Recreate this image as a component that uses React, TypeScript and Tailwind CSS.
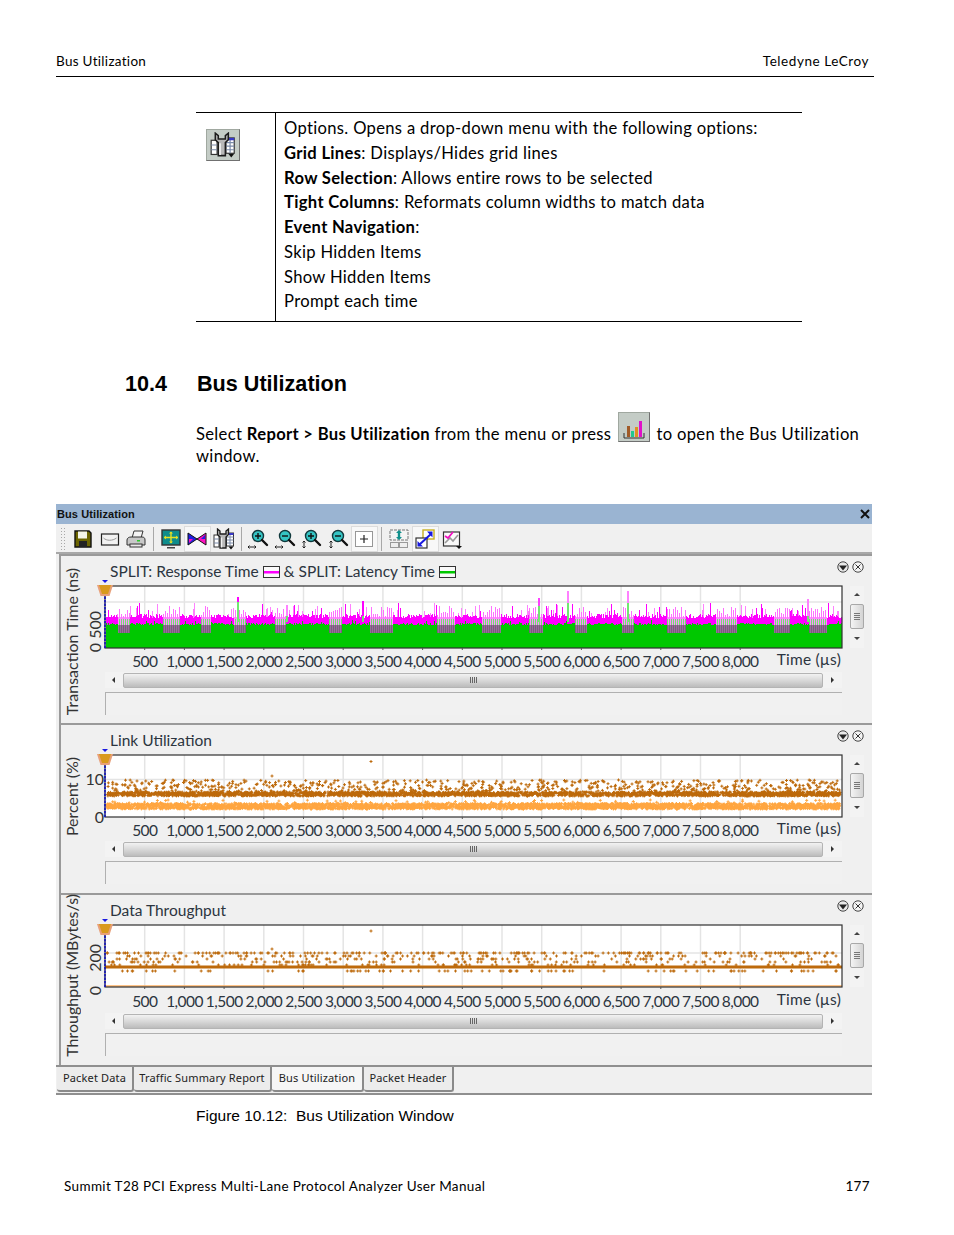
import React from 'react';

const PLOT_W = 737;
const PLOT_H = 62;
const TICKS = ['500', '1,000', '1,500', '2,000', '2,500', '3,000', '3,500', '4,000', '4,500', '5,000', '5,500', '6,000', '6,500', '7,000', '7,500', '8,000'];

// small seeded generator so every render gives the same chart
const makeRandom = (seed: number) => {
    let s = seed;
    return () => {
        s = (s * 16807) % 2147483647;
        return s / 2147483647;
    };
};

const dots = (pts: [number, number][]) =>
    pts.map(([x, y]) => `M${(x - 1.5).toFixed(1)} ${y.toFixed(1)}h3M${x.toFixed(1)} ${(y - 1.5).toFixed(1)}v3`).join('');

const GridLines = ({ rows }: { rows: number[] }) => (
    <g stroke="#e4e4e4" strokeWidth="1.5">
        {TICKS.map((_, i) => (
            <line key={i} x1={39.7 * (i + 1)} x2={39.7 * (i + 1)} y1="0" y2={PLOT_H} />
        ))}
        {rows.map((y) => (
            <line key={y} x1="0" x2={PLOT_W} y1={y} y2={y} />
        ))}
    </g>
);

const PlotFrame = () => (
    <g>
        <rect x="0" y="0" width={PLOT_W} height={PLOT_H} fill="none" stroke="#303030" strokeWidth="1.2" />
        {TICKS.map((_, i) => (
            <line key={i} x1={39.7 * (i + 1)} x2={39.7 * (i + 1)} y1={PLOT_H} y2={PLOT_H + 2} stroke="#555" />
        ))}
        <line x1="0" x2="0" y1="0" y2={PLOT_H} stroke="#1010c0" strokeWidth="1.6" strokeDasharray="2.5 1" />
        <path d="M-3 -6h6l-3 3z" fill="#1a1ae0" />
        <path d="M-8 -1h16l-3.5 11h-9z" fill="#e8a07a" />
        <path d="M-6 -1h12l-3 9h-6z" fill="#d99a1c" />
    </g>
);

const responseBars = () => {
    const rnd = makeRandom(4711);
    const bars: React.ReactNode[] = [];
    let left = 12;
    let gappy = false;
    const spikes: Record<number, [number, string, number]> = {
        132: [11, '#ff00ff', 16],
        181: [19, '#ff80ff', 30],
        257: [15, '#ff00ff', 30],
        433: [12, '#ff40ff', 20],
        462: [5, '#ff80ff', 17],
        522: [5, '#ff80ff', 17],
        702: [13, '#ff80ff', 30],
    };
    const bar = (key: string, x: number, y: number, h: number, fill: string) => {
        bars.push(<rect key={key} x={x} y={y} width="1" height={h} fill={fill} />);
    };
    for (let x = 1; x < PLOT_W; x++) {
        if (left-- <= 0) {
            gappy = !gappy;
            left = gappy ? 8 + rnd() * 14 : 16 + rnd() * 36;
        }
        const greenTop = 37 + rnd() * 2 - (rnd() > 0.95 ? 3 : 0);
        const magTop = 28 + rnd() * 4;
        if (gappy) {
            bar(`g${x}`, x, 47, PLOT_H - 47, '#00c800');
            if (x % 2 === 0) {
                const top = 20 + rnd() * 10;
                bar(`a${x}`, x, top, 33 - top, '#ff70ff');
                bar(`b${x}`, x, 33, 6, '#70e070');
                bar(`d${x}`, x, 39, 8, '#7c5c7c');
            } else {
                bar(`a${x}`, x, 31, 8, '#ff90ff');
                bar(`d${x}`, x, 39, 8, '#94709a');
            }
        } else {
            bar(`c${x}`, x, greenTop, PLOT_H - greenTop, '#00c800');
            bar(`a${x}`, x, magTop, greenTop - magTop, '#ff00ff');
            if (rnd() > 0.8) {
                const top = 17 + rnd() * 11;
                bar(`l${x}`, x, top, magTop - top, rnd() > 0.6 ? '#ff00ff' : '#ff80ff');
            }
        }
    }
    Object.entries(spikes).forEach(([k, [top, color, mid]]) => {
        bars.push(<rect key={`s${k}`} x={Number(k)} y={top} width="1.5" height={mid - top} fill={color} />);
        bars.push(<rect key={`n${k}`} x={Number(k)} y={mid} width="1.5" height={36 - mid} fill="#70e870" />);
    });
    return bars;
};

const ResponseChart = () => (
    <svg width={PLOT_W} height={PLOT_H} className="block overflow-visible bg-white">
        <GridLines rows={[16]} />
        <g shapeRendering="crispEdges">{responseBars()}</g>
        <PlotFrame />
    </svg>
);

const linkPoints = () => {
    const rnd = makeRandom(991);
    const dark: [number, number][] = [[266, 6.5], [167, 21]];
    const light: [number, number][] = [];
    for (let i = 0; i < 620; i++) dark.push([2 + rnd() * 733, 25 + rnd() * 12]);
    for (let i = 0; i < 2400; i++) dark.push([2 + rnd() * 733, 37 + rnd() * 4]);
    for (let i = 0; i < 3200; i++) light.push([2 + rnd() * 733, 48.5 + rnd() * 5.5]);
    for (let i = 0; i < 60; i++) light.push([2 + rnd() * 733, 45 + rnd() * 3]);
    return { dark: dots(dark), light: dots(light) };
};

const LinkChart = () => {
    const { dark, light } = linkPoints();
    return (
        <svg width={PLOT_W} height={PLOT_H} className="block overflow-visible bg-white">
            <GridLines rows={[24.5]} />
            <path d={light} stroke="#ffa640" fill="none" />
            <path d={dark} stroke="#bd6a0c" fill="none" />
            <PlotFrame />
        </svg>
    );
};

const throughputPoints = () => {
    const rnd = makeRandom(3571);
    const pts: [number, number][] = [[266, 6], [167, 24]];
    const rows = [31, 34, 37, 40, 46];
    for (let i = 0; i < 620; i++) {
        const y = i % 3 === 0 ? 28 : rows[Math.floor(rnd() * rows.length)];
        pts.push([2 + rnd() * 733, y]);
    }
    return dots(pts);
};

const ThroughputChart = () => (
    <svg width={PLOT_W} height={PLOT_H} className="block overflow-visible bg-white">
        <GridLines rows={[28]} />
        <path d={throughputPoints()} stroke="#bd6a0c" fill="none" />
        <line x1="0" x2={PLOT_W} y1="42" y2="42" stroke="#bd6a0c" strokeWidth="2.8" />
        <line x1="0" x2={PLOT_W} y1="61" y2="61" stroke="#ffb060" strokeWidth="1.5" />
        <PlotFrame />
    </svg>
);

const RoundButtons = () => (
    <div className="flex gap-[3px]">
        <svg width="12" height="12" viewBox="0 0 12 12">
            <circle cx="6" cy="6" r="5.2" fill="#e8e8e8" stroke="#444" />
            <path d="M2 4.5h8l-4 5z" fill="#222" />
        </svg>
        <svg width="12" height="12" viewBox="0 0 12 12">
            <circle cx="6" cy="6" r="5.2" fill="#f4f4f4" stroke="#444" />
            <path d="M3.5 3.5l5 5M8.5 3.5l-5 5" stroke="#333" />
        </svg>
    </div>
);

const VScroll = () => (
    <div className="ml-[8px] flex h-[62px] w-[14px] flex-col items-center bg-[#f3f3f3]">
        <svg width="14" height="14" viewBox="0 0 14 14" className="mt-[2px]">
            <path d="M4 8h6l-3-3z" fill="#444" />
        </svg>
        <div className="mt-[2px] flex h-[25px] w-[14px] flex-col items-center justify-center gap-[1px] rounded-[2px] border border-[#a8a8a8] bg-gradient-to-r from-[#f4f4f4] to-[#d4d4d4]">
            <div className="h-px w-[6px] bg-[#777]" />
            <div className="h-px w-[6px] bg-[#777]" />
            <div className="h-px w-[6px] bg-[#777]" />
            <div className="h-px w-[6px] bg-[#777]" />
        </div>
        <svg width="14" height="14" viewBox="0 0 14 14" className="mt-[2px]">
            <path d="M4 6h6l-3 3z" fill="#444" />
        </svg>
    </div>
);

const HScroll = () => (
    <div className="flex h-[16px] w-[737px] items-center bg-[#f3f3f3]">
        <svg width="18" height="16" viewBox="0 0 18 16">
            <path d="M10 5v6l-3-3z" fill="#333" />
        </svg>
        <div className="flex h-[15px] w-[700px] items-center justify-center rounded-[2px] border border-[#b4b4b4] bg-gradient-to-b from-[#f2f2f2] via-[#d8d8d8] to-[#bcbcbc]">
            <div className="flex gap-[1px]">
                <div className="h-[6px] w-px bg-[#666]" />
                <div className="h-[6px] w-px bg-[#666]" />
                <div className="h-[6px] w-px bg-[#666]" />
                <div className="h-[6px] w-px bg-[#666]" />
            </div>
        </div>
        <svg width="19" height="16" viewBox="0 0 19 16">
            <path d="M8 5v6l3-3z" fill="#333" />
        </svg>
    </div>
);

const XLabels = ({ rowClass }: { rowClass: string }) => (
    <div className={`flex w-[737px] items-center pl-[20px] text-[#2c3540] ${rowClass}`}>
        {TICKS.map((t) => (
            <div key={t} className="flex w-[39.7px] shrink-0 justify-center whitespace-nowrap pt-[3px] text-[15.5px] tracking-[-0.55px]">
                {t}
            </div>
        ))}
        <div className="-mt-[1px] ml-auto mr-[1px] whitespace-nowrap text-[15.5px] tracking-[0.2px]">Time (µs)</div>
    </div>
);

interface PanelProps {
    axis: string;
    axisClass: string;
    title: React.ReactNode;
    ticks: React.ReactNode;
    chart: React.ReactNode;
    rowClass: string;
    panelClass: string;
}

const Panel = ({ axis, axisClass, title, ticks, chart, rowClass, panelClass }: PanelProps) => (
    <div className={`ml-[3px] flex border-l-2 border-t-2 border-[#9a9a9a] ${panelClass}`}>
        <div className={`flex w-[22px] shrink-0 items-center justify-center ${axisClass}`}>
            <span className="rotate-180 whitespace-nowrap text-[16px] text-[#333] [writing-mode:vertical-rl]">{axis}</span>
        </div>
        <div className="flex flex-col">
            <div className="flex h-[30px] items-start justify-between pl-[27px]">
                <div className="flex h-[30px] items-center pt-[2px] text-[15.5px] text-[#2c3540]">{title}</div>
                <div className="pt-[5px]"><RoundButtons /></div>
            </div>
            <div className="flex h-[62px]">
                <div className="h-[62px] w-[22px] shrink-0 text-[16px] text-[#333]">{ticks}</div>
                {chart}
                <VScroll />
            </div>
            <div className="pl-[22px]">
                <XLabels rowClass={rowClass} />
                <HScroll />
                <div className="mt-[4px] h-[23px] w-[737px] border-l border-t border-[#b0b0b0] bg-[#f1f1f1]" />
            </div>
        </div>
    </div>
);

const Legend = ({ color }: { color: string }) => (
    <svg width="17" height="12" viewBox="0 0 17 12" className="mx-[4px] inline-block">
        <rect x="0.5" y="0.5" width="16" height="11" fill="#fafafa" stroke="#333" />
        <rect x="1" y="5" width="15" height="2.5" fill={color} />
    </svg>
);

const Icon = ({ children }: { children: React.ReactNode }) => (
    <svg width="22" height="22" viewBox="0 0 22 22">{children}</svg>
);

const ZoomIcon = ({ minus, vertical }: { minus?: boolean; vertical?: boolean }) => (
    <Icon>
        <circle cx="11" cy="8" r="5.5" fill="#35c4c4" stroke="#10383c" strokeWidth="1.4" />
        <path d="M15 12l5 5" stroke="#111" strokeWidth="2.4" strokeLinecap="round" />
        <path d={minus ? 'M8 8h6' : 'M8 8h6M11 5v6'} stroke="#111" strokeWidth="1.4" />
        {vertical ? (
            <path d="M4 13v7M2.5 14.5L4 13l1.5 1.5M2.5 18.5L4 20l1.5-1.5" stroke="#222" fill="none" />
        ) : (
            <path d="M1 19h8M2.5 17.5L1 19l1.5 1.5M7.5 17.5L9 19l-1.5 1.5" stroke="#222" fill="none" />
        )}
    </Icon>
);

const ToolsIcon = ({ size = 22 }: { size?: number }) => (
    <svg width={size} height={size} viewBox="0 0 22 22">
        <rect x="1" y="7" width="5" height="12" fill="#fff" stroke="#333" />
        <path d="M1 11h5M1 15h5" stroke="#7a8aa8" />
        <rect x="13.5" y="5" width="7" height="13" fill="#fff" stroke="#333" />
        <path d="M13.5 9h7M13.5 12h7M13.5 15h7M17 5v13" stroke="#7a8aa8" />
        <rect x="13.5" y="5" width="7" height="2" fill="#3838c8" />
        <path d="M4.5 1v5.5l2.5 2.5v11h6v-11l2.5-2.5V1l-2.5 2v3h-6V3z" fill="#b8b8b8" stroke="#1c1c1c" strokeWidth="1.3" />
        <path d="M8.5 9.5v10" stroke="#f2f2f2" strokeWidth="1.4" />
        <path d="M15.5 18.5h5l-2.5 3z" fill="#111" />
    </svg>
);

const toolbarBtn = 'flex h-[26px] w-[26.5px] shrink-0 items-center justify-center';
const toolbarOn = 'flex h-[26px] w-[26.5px] shrink-0 items-center justify-center border border-[#dcdcdc] bg-[#f8f8f8]';
const Sep = () => <div className="mx-[3.5px] h-[24px] w-px shrink-0 bg-[#a8a8a8]" />;

const Toolbar = () => (
    <div className="flex h-[30px] items-center border-b-2 border-[#a8a8a8] bg-[#f0f0f0] pl-[4px] pt-[1px]">
        <div className="mr-[4px] h-[24px] w-[6px] bg-[radial-gradient(#a8a8a8_1px,transparent_1px)] [background-size:3px_3px]" />
        <div className={toolbarBtn}>
            <Icon>
                <path d="M3 3h14l2 2v14H3z" fill="#6b6400" stroke="#111" strokeWidth="1.4" />
                <rect x="6" y="3.5" width="9" height="7" fill="#f4f4e8" />
                <rect x="7" y="13" width="8" height="6" fill="#222" />
            </Icon>
        </div>
        <div className={toolbarBtn}>
            <Icon>
                <rect x="2.5" y="6" width="17" height="11" fill="#f2f2f2" stroke="#222" strokeWidth="1.2" />
                <path d="M4.5 10c3 3 9 3 13 0" stroke="#999" fill="none" />
            </Icon>
        </div>
        <div className={toolbarBtn}>
            <Icon>
                <path d="M7 10l2-7h9l-2 7" fill="#f4f4f4" stroke="#333" />
                <path d="M2 12c0-2 2-3 4-3h11c2 0 3 1 3 3v5H2z" fill="#c8c8c8" stroke="#333" />
                <rect x="5" y="16" width="12" height="3" fill="#e8e8e8" stroke="#333" />
                <rect x="12" y="12" width="3" height="1.5" fill="#2bc82b" />
            </Icon>
        </div>
        <Sep />
        <div className={toolbarBtn}>
            <Icon>
                <rect x="2" y="2" width="18" height="15" fill="#0e8c8c" stroke="#333" strokeWidth="1.4" />
                <path d="M11 4v11M4 9.5h14" stroke="#e8e020" strokeWidth="1.4" />
                <path d="M9 5.5l2-2 2 2zM9 13.5l2 2 2-2zM6 7.5l-2 2 2 2zM16 7.5l2 2-2 2z" fill="#e8e020" />
                <path d="M7 19h8v1.5H7z" fill="#444" />
            </Icon>
        </div>
        <div className={toolbarOn}>
            <Icon>
                <path d="M2 5l9 6-9 6z" fill="#2020e0" stroke="#111" />
                <path d="M20 5l-9 6 9 6z" fill="#ff10c0" stroke="#111" />
                <path d="M3 11h4l-4 4z" fill="#ff10c0" />
                <path d="M19 7v4h-4z" fill="#2020e0" />
            </Icon>
        </div>
        <div className={toolbarBtn}><ToolsIcon /></div>
        <Sep />
        <div className={toolbarBtn}><ZoomIcon /></div>
        <div className={toolbarBtn}><ZoomIcon minus /></div>
        <div className={toolbarBtn}><ZoomIcon vertical /></div>
        <div className={toolbarBtn}><ZoomIcon minus vertical /></div>
        <div className={toolbarOn}>
            <Icon>
                <rect x="2.5" y="3.5" width="17" height="15" fill="#fff" stroke="#333" strokeDasharray="1 1" />
                <path d="M11 7v8M7 11h8" stroke="#222" strokeWidth="1.2" />
            </Icon>
        </div>
        <Sep />
        <div className={toolbarBtn}>
            <Icon>
                <rect x="2" y="2" width="18" height="10" fill="#f4f4f4" stroke="#777" strokeDasharray="3 1" />
                <path d="M11 3v8" stroke="#11908c" strokeWidth="2.4" />
                <path d="M8 5l3-3 3 3zM8 9l3 3 3-3z" fill="#11908c" />
                <rect x="2.5" y="14.5" width="8" height="5" fill="#eee" stroke="#999" />
                <rect x="11.5" y="14.5" width="8" height="5" fill="#eee" stroke="#999" />
            </Icon>
        </div>
        <div className={toolbarOn}>
            <Icon>
                <rect x="9" y="2" width="11" height="9" fill="#fff" stroke="#c8b020" strokeWidth="1.4" />
                <rect x="2" y="10" width="11" height="10" fill="#fff" stroke="#333" strokeWidth="1.2" />
                <path d="M5 17l12-11" stroke="#1818e0" strokeWidth="2" />
                <path d="M3.5 13v5.5H9zM18.5 9.5V3.5H13z" fill="#1818e0" />
            </Icon>
        </div>
        <div className={toolbarBtn}>
            <Icon>
                <rect x="2.5" y="4" width="16" height="14" fill="#fafafa" stroke="#333" strokeWidth="1.2" />
                <path d="M4 15l5-5 3 3 5-6" stroke="#999" strokeWidth="1.6" fill="none" />
                <path d="M4 8l3 2 5-6" stroke="#f010c0" strokeWidth="1.8" fill="none" />
                <path d="M15 18h6l-3 3z" fill="#111" />
            </Icon>
        </div>
    </div>
);

const Tab = ({ label, w, active }: { label: string; w: string; active?: boolean }) => (
    <div
        className={`flex h-[25px] items-center justify-center rounded-b-[3px] border-b-2 border-r-2 border-[#8a8a8a] text-[11px] tracking-[0.15px] text-[#222] ${w} ${
            active ? 'bg-[#f6f6f6]' : 'bg-[#ececec]'
        }`}
    >
        {label}
    </div>
);

export default function App() {
    return (
        <div className="h-[1235px] w-[954px] overflow-hidden bg-white font-['Lato',sans-serif] text-black">
            {/* page header */}
            <div className="ml-[56px] flex h-[77px] w-[818px] items-end justify-between border-b border-black pb-[5px] text-[13.5px] tracking-[0.3px]">
                <span>Bus Utilization</span>
                <span className="mr-[5px] tracking-[0.55px]">Teledyne LeCroy</span>
            </div>

            {/* options table */}
            <div className="ml-[196px] mt-[35px] flex h-[210px] w-[606px] border-b border-t border-black">
                <div className="w-[80px] shrink-0 border-r border-black pl-[10px] pt-[16px]">
                    <div className="flex h-[32px] w-[34px] items-center justify-center border border-[#a0a8a0] border-b-[#707070] border-r-[#707070] bg-[#c4ccc6]">
                        <ToolsIcon size={26} />
                    </div>
                </div>
                <div className="whitespace-nowrap pl-[8px] pt-[3px] text-[16.6px] leading-[24.75px] tracking-[0.32px]">
                    <p>Options. Opens a drop-down menu with the following options:</p>
                    <p><b>Grid Lines</b>: Displays/Hides grid lines</p>
                    <p><b>Row Selection</b>: Allows entire rows to be selected</p>
                    <p><b>Tight Columns</b>: Reformats column widths to match data</p>
                    <p><b>Event Navigation</b>:</p>
                    <p>Skip Hidden Items</p>
                    <p>Show Hidden Items</p>
                    <p>Prompt each time</p>
                </div>
            </div>

            {/* section heading */}
            <div className="ml-[125px] mt-[48px] flex h-[28px] items-center font-['Liberation_Sans',sans-serif] text-[21.6px] font-bold">
                <span className="w-[72px]">10.4</span>
                <span>Bus Utilization</span>
            </div>

            <p className="ml-[196px] mt-[25px] w-[680px] text-[16.6px] leading-[22px] tracking-[0.32px]">
                Select <b>Report &gt; Bus Utilization</b> from the menu or press{' '}
                <span className="mx-[2px] -mt-[14px] mb-[3px] inline-flex h-[30px] w-[32px] items-end justify-center border border-[#a0a8a0] border-b-[#707070] border-r-[#707070] bg-[#c4ccc6] align-bottom">
                    <svg width="26" height="24" viewBox="0 0 26 24">
                        <path d="M3 16v5h20v-5" fill="none" stroke="#333" />
                        <rect x="6" y="9" width="3" height="11" fill="#a05a28" />
                        <rect x="10" y="14" width="3" height="6" fill="#20c890" />
                        <rect x="14" y="10" width="3" height="10" fill="#e09020" />
                        <rect x="18" y="4" width="3" height="16" fill="#e010c8" />
                    </svg>
                </span>{' '}
                to open the Bus Utilization window.
            </p>

            {/* bus utilization window */}
            <div className="ml-[56px] mt-[37px] w-[816px] bg-[#f0f0f0]">
                <div className="flex h-[20px] items-center justify-between bg-[#9ab4d2] pl-[1px] pr-[2px] font-['Liberation_Sans',sans-serif] text-[11px] font-bold tracking-[0.1px] text-[#111]">
                    <span>Bus Utilization</span>
                    <svg width="10" height="10" viewBox="0 0 10 10">
                        <path d="M1 1l8 8M9 1l-8 8" stroke="#111" strokeWidth="2" />
                    </svg>
                </div>
                <Toolbar />
                <Panel
                    axis="Transaction Time (ns)"
                    axisClass="pt-[4px]"
                    panelClass="h-[169px]"
                    rowClass="h-[24px]"
                    title={
                        <>
                            SPLIT: Response Time
                            <Legend color="#ff00ff" />
                            &amp; SPLIT: Latency Time
                            <Legend color="#00c800" />
                        </>
                    }
                    ticks={
                        <div className="flex h-[66px] items-end justify-center pl-[2px]">
                            <span className="rotate-180 whitespace-nowrap [writing-mode:vertical-rl]">0 500</span>
                        </div>
                    }
                    chart={<ResponseChart />}
                />
                <Panel
                    axis="Percent (%)"
                    axisClass="pb-[24px]"
                    panelClass="h-[170px]"
                    rowClass="h-[24px]"
                    title="Link Utilization"
                    ticks={
                        <div className="flex flex-col items-end pr-[1px] pt-[14px] leading-[20px]">
                            <span>10</span>
                            <span className="mt-[18px]">0</span>
                        </div>
                    }
                    chart={<LinkChart />}
                />
                <Panel
                    axis="Throughput (MBytes/s)"
                    axisClass="pb-[10px]"
                    panelClass="h-[172px]"
                    rowClass="h-[26px]"
                    title="Data Throughput"
                    ticks={
                        <div className="flex h-[70px] flex-col items-center justify-end gap-[14px] pl-[2px]">
                            <span className="rotate-180 whitespace-nowrap [writing-mode:vertical-rl]">200</span>
                            <span className="rotate-180 whitespace-nowrap [writing-mode:vertical-rl]">0</span>
                        </div>
                    }
                    chart={<ThroughputChart />}
                />
                <div className="h-[30px] border-b-2 border-t-2 border-[#8f8f8f] bg-[#f0f0f0]">
                    <div className="flex pl-[1px] font-['Noto_Sans',sans-serif]">
                        <Tab label="Packet Data" w="w-[77px]" />
                        <Tab label="Traffic Summary Report" w="w-[138px]" />
                        <Tab label="Bus Utilization" w="w-[92px]" active />
                        <Tab label="Packet Header" w="w-[90px]" />
                    </div>
                </div>
            </div>

            <p className="ml-[196px] mt-[11px] whitespace-pre font-['Liberation_Sans',sans-serif] text-[15.5px] leading-[20px]">
                Figure 10.12:  Bus Utilization Window
            </p>

            {/* page footer */}
            <div className="ml-[64px] mt-[50px] flex w-[806px] justify-between text-[13.5px] leading-[20px] tracking-[0.36px]">
                <span>Summit T28 PCI Express Multi-Lane Protocol Analyzer User Manual</span>
                <span>177</span>
            </div>
        </div>
    );
}
